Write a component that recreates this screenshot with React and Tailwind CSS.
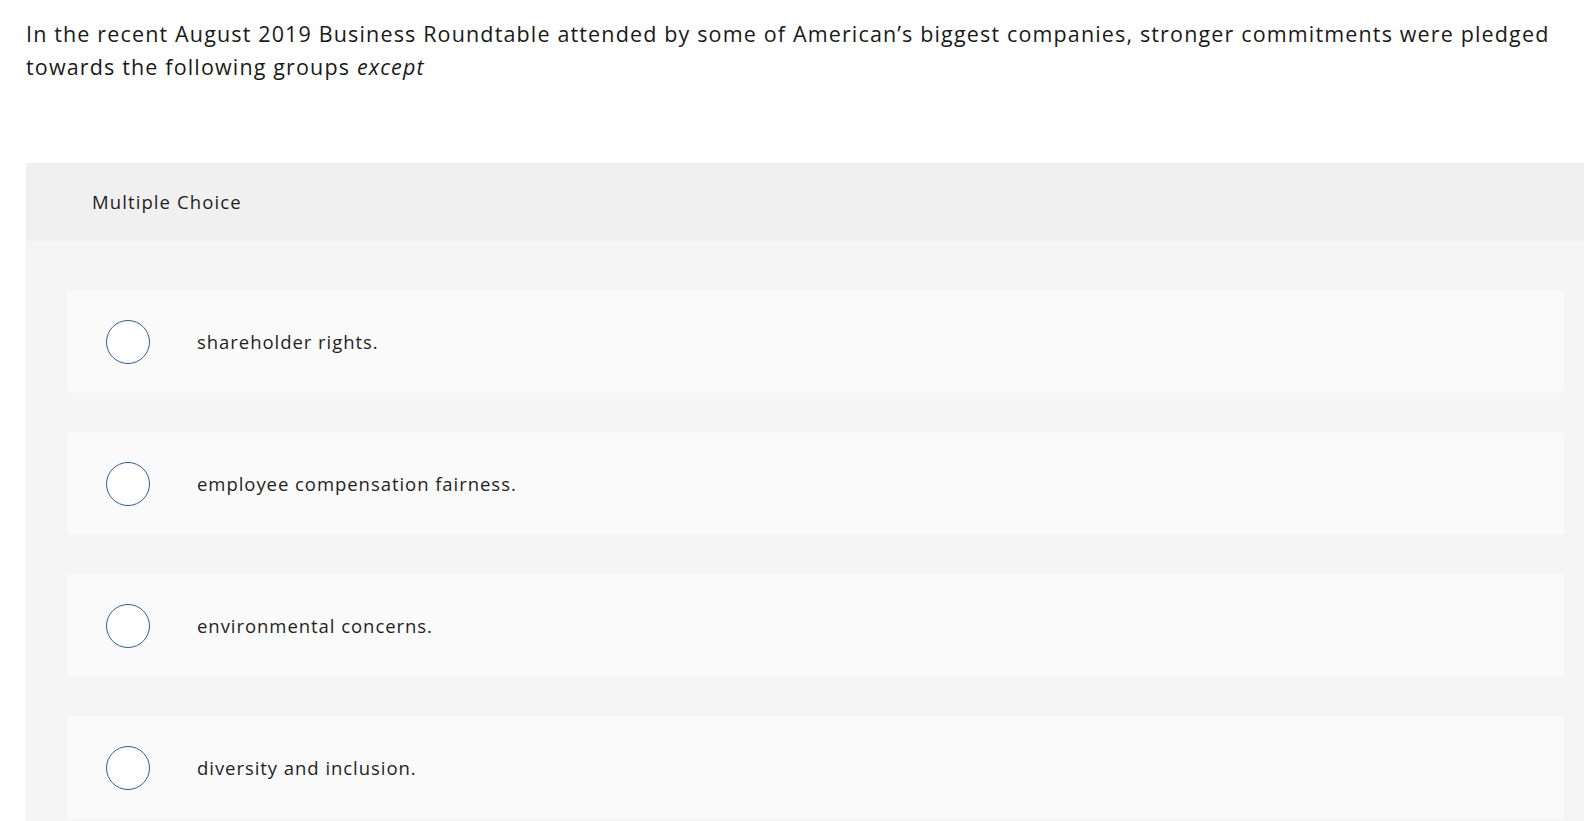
const options = [
  'shareholder rights.',
  'employee compensation fairness.',
  'environmental concerns.',
  'diversity and inclusion.',
];

function Option({ label }) {
  return (
    <div className="flex items-center h-[103px] rounded bg-[#fafafa] pl-[39px]">
      <span className="w-[44px] h-[44px] rounded-full border-[1.5px] border-[#2e5f8f] bg-white flex-shrink-0" />
      <span className="ml-[47px] text-[18.5px] tracking-[0.95px] text-[#1f1f1f]">{label}</span>
    </div>
  );
}

export default function App() {
  return (
    <div className="bg-white min-h-[821px] overflow-hidden font-['Open_Sans',sans-serif] pl-[26px]">
      <p className="pt-[17px] pr-[16px] text-[21.5px] leading-[33px] tracking-[1.15px] text-[#1a1a1a]">
        In the recent August 2019 Business Roundtable attended by some of American’s biggest companies, stronger commitments were pledged towards the following groups <em>except</em>
      </p>

      {/* Question block */}
      <div className="mt-[80px] w-[1580px] rounded-tl bg-[#f5f5f5]">
        <div className="h-[78px] bg-[#f0f0f0] pl-[66px] flex items-center">
          <span className="text-[18.5px] tracking-[1.1px] text-[#1f1f1f]">Multiple Choice</span>
        </div>
        <div className="pt-[49px] pl-[41px] pr-[42px] pb-[40px] flex flex-col gap-[39px]">
          {options.map((o) => (
            <Option key={o} label={o} />
          ))}
        </div>
      </div>
    </div>
  );
}
